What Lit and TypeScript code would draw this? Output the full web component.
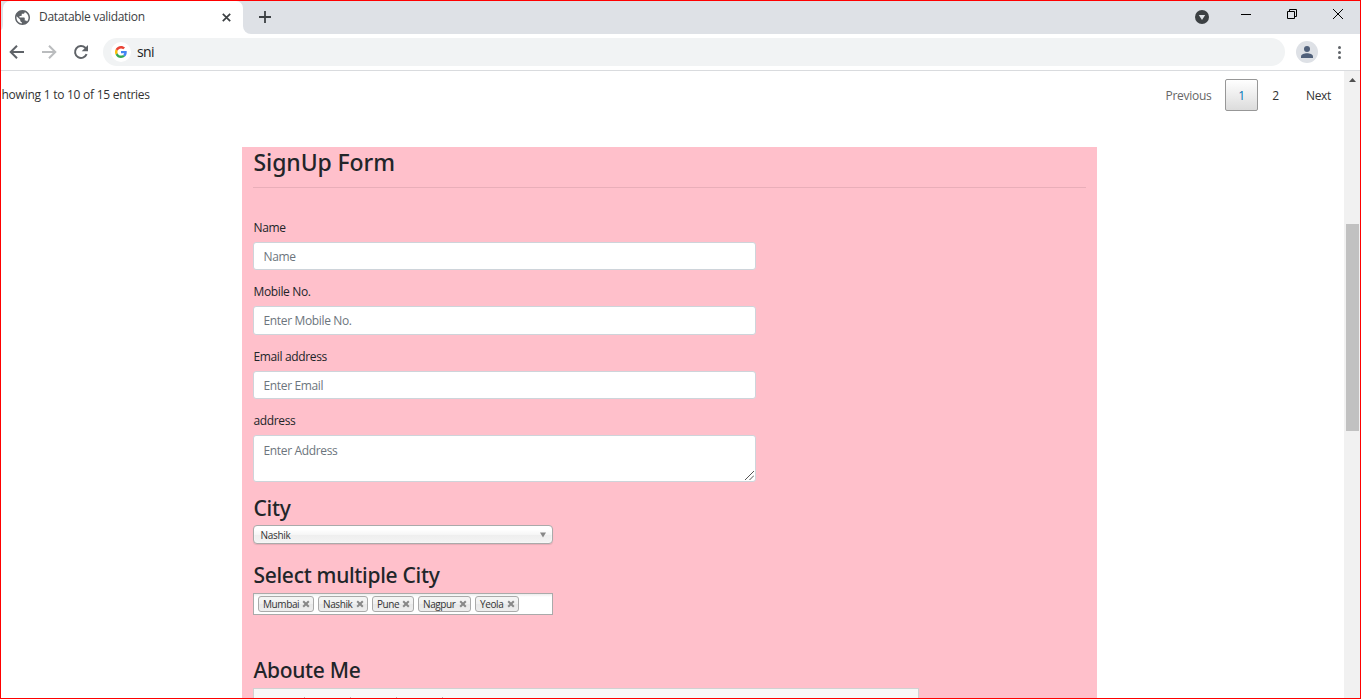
import { LitElement, html, css } from "lit";
import { customElement } from "lit/decorators.js";

interface Field { label: string; placeholder: string; cls: string; }

const FIELDS: Field[] = [
  { label: "Name", placeholder: "Name", cls: "f1" },
  { label: "Mobile No.", placeholder: "Enter Mobile No.", cls: "f2" },
  { label: "Email address", placeholder: "Enter Email", cls: "f3" },
];

const CITIES = [
  { name: "Mumbai", width: 56 },
  { name: "Nashik", width: 50 },
  { name: "Pune", width: 42 },
  { name: "Nagpur", width: 53 },
  { name: "Yeola", width: 44 },
];

@customElement("browser-chrome")
export class BrowserChrome extends LitElement {
  static styles = css`
    :host { display: block; flex: none; font-family: "Open Sans", "Noto Sans", sans-serif; color: #3c4043; }
    svg { display: block; flex: none; }
    .strip { display: flex; height: 33px; background: #dee1e6; }
    .edge { width: 2px; background: #fff; }
    .edge i { display: block; height: 29px; background: #dee1e6; border-bottom-right-radius: 2px 6px; }
    .tab { box-sizing: border-box; width: 240px; height: 33px; display: flex; align-items: center; padding-left: 12px; background: #fff; border-radius: 7px 7px 0 0; }
    .title { margin: -1px 0 0 9px; width: 183px; font-size: 12px; letter-spacing: -0.32px; line-height: 16px; white-space: nowrap; }
    .after { width: 8px; background: #fff; }
    .after i { display: block; height: 33px; background: #dee1e6; border-bottom-left-radius: 8px; }
    .plus { margin: 10px 0 0 8px; }
    .spacer { flex: 1; }
    .win { margin-top: 7px; }
    .down { margin: 9px 32px 0 0; }
    .min { margin-right: 36px; }
    .max { margin-right: 35px; }
    .close { margin-right: 16px; }
    .bar { display: flex; align-items: center; box-sizing: border-box; height: 37px; background: #fff; border-bottom: 1px solid #d9dbde; padding-left: 6px; }
    .nav { margin-right: 12px; }
    .omni { display: flex; align-items: center; flex: 1; height: 28px; border-radius: 14px; background: #f1f3f4; padding-left: 8px; }
    .omni span { margin-left: 6px; font-size: 14px; letter-spacing: -0.6px; line-height: 20px; color: #202124; }
    .g { width: 20px; height: 20px; border-radius: 50%; background: #fff; display: flex; align-items: center; justify-content: center; }
    .avatar { margin: 0 0 0 11px; }
    .dots { margin: 0 19px 0 20px; }
  `;

  render() {
    return html`
      <div class="strip">
        <div class="edge"><i></i></div>
        <div class="tab">
          <svg width="15" height="15" viewBox="2 2 20 20"><path fill="#5f6368" d="M12 2C6.480 2 2 6.480 2 12s4.480 10 10 10 10-4.480 10-10S17.520 2 12 2zm-1 17.930c-3.950-.49-7-3.850-7-7.930 0-.62.08-1.210.21-1.790L9 15v1c0 1.100.9 2 2 2v1.930zm6.900-2.540c-.26-.81-1-1.390-1.900-1.390h-1v-3c0-.55-.45-1-1-1H8v-2h2c.55 0 1-.45 1-1V7h2c1.100 0 2-.9 2-2v-.41c2.930 1.190 5 4.060 5 7.410 0 2.080-.8 3.970-2.100 5.390z"/></svg>
          <span class="title">Datatable validation</span>
          <svg width="9" height="9" viewBox="0 0 9 9"><path d="M.8.8 8.200 8.200M8.200.8.8 8.200" stroke="#3c4043" stroke-width="1.700"/></svg>
        </div>
        <div class="after"><i></i></div>
        <svg class="plus" width="12" height="12" viewBox="0 0 12 12"><path d="M6 0v12M0 6h12" stroke="#3c4043" stroke-width="1.800"/></svg>
        <div class="spacer"></div>
        <svg class="down" width="14" height="14" viewBox="0 0 14 14"><circle cx="7" cy="7" r="7" fill="#3c4043"/><path d="M3.800 5h6.400L7 10z" fill="#dee1e6"/></svg>
        <svg class="win min" width="10" height="12" viewBox="0 0 10 12"><path d="M0 6.500h10" stroke="#000"/></svg>
        <svg class="win max" width="10" height="12" viewBox="0 0 10 12"><path d="M.5 3.500h7v7h-7zM2.500 3.500v-2h7v7h-2" fill="none" stroke="#000"/></svg>
        <svg class="win close" width="12" height="12" viewBox="0 0 12 12"><path d="M1 1l10 10M11 1 1 11" stroke="#000"/></svg>
      </div>
      <div class="bar">
        <svg class="nav" width="20" height="20" viewBox="0 0 20 20"><path d="M17 10H4M10 3.700 3.700 10l6.300 6.300" fill="none" stroke="#5f6368" stroke-width="2"/></svg>
        <svg class="nav" width="20" height="20" viewBox="0 0 20 20"><path d="M3 10h13M10 3.700 16.300 10 10 16.300" fill="none" stroke="#babcbe" stroke-width="2"/></svg>
        <svg class="nav" width="20" height="20" viewBox="0 0 20 20"><path d="M15.600 12.200A6 6 0 1 1 14.300 5.700L15.500 7" fill="none" stroke="#5f6368" stroke-width="2"/><path d="M17 3v6.300h-6.300z" fill="#5f6368"/></svg>
        <div class="omni">
          <div class="g"><svg width="12" height="12" viewBox="0 0 48 48"><path fill="#EA4335" d="M24 9.500c3.540 0 6.710 1.220 9.210 3.600l6.850-6.850C35.900 2.380 30.470 0 24 0 14.620 0 6.510 5.380 2.560 13.220l7.980 6.190C12.430 13.720 17.740 9.500 24 9.500z"/><path fill="#4285F4" d="M46.980 24.550c0-1.570-.15-3.090-.38-4.550H24v9.020h12.940c-.58 2.960-2.260 5.480-4.780 7.180l7.730 6c4.510-4.180 7.090-10.360 7.090-17.650z"/><path fill="#FBBC05" d="M10.530 28.590A14.500 14.500 0 0 1 9.770 24c0-1.600.27-3.140.76-4.590l-7.980-6.190A23.900 23.900 0 0 0 0 24c0 3.880.92 7.540 2.560 10.780z"/><path fill="#34A853" d="M24 48c6.480 0 11.930-2.130 15.890-5.810l-7.730-6c-2.150 1.450-4.920 2.300-8.160 2.300-6.260 0-11.570-4.220-13.470-9.910l-7.980 6.190C6.510 42.620 14.620 48 24 48z"/></svg></div>
          <span>sni</span>
        </div>
        <svg class="avatar" width="22" height="22" viewBox="0 0 22 22"><circle cx="11" cy="11" r="11" fill="#dee1e6"/><circle cx="11" cy="8" r="3" fill="#50607a"/><path d="M5 17v-1.500c0-2.200 3.500-3.300 6-3.300s6 1.100 6 3.300V17z" fill="#50607a"/></svg>
        <svg class="dots" width="3" height="13" viewBox="0 0 3 13"><g fill="#5f6368"><circle cx="1.500" cy="1.500" r="1.500"/><circle cx="1.500" cy="6.500" r="1.500"/><circle cx="1.500" cy="11.500" r="1.500"/></g></svg>
      </div>
    `;
  }
}

@customElement("signup-form")
export class SignupForm extends LitElement {
  static styles = css`
    :host { display: block; box-sizing: border-box; width: 855px; height: 560px; padding: 0 11px; background: #ffc0cb; color: #212529; font-family: "Open Sans", "Noto Sans", sans-serif; }
    h3, h4 { margin: 0; padding-left: 0.5px; font-family: "Noto Sans", "Open Sans", sans-serif; font-weight: 500; white-space: nowrap; }
    h3 { font-size: 23px; line-height: 31px; height: 40px; letter-spacing: -0.1px; }
    .rule { height: 1px; background: #e9aeb9; margin-bottom: 30px; }
    .label { height: 20px; font-size: 12px; line-height: 20px; letter-spacing: -0.36px; padding-left: 0.5px; }
    .box { box-sizing: border-box; width: 503px; margin-top: 4px; border: 1px solid #ced4da; border-radius: 3px; background: #fff; color: #6c757d; font-size: 12px; letter-spacing: -0.35px; line-height: 19px; padding: 4px 9px 4px 9.5px; }
    .f1 { height: 28px; margin-bottom: 12px; }
    .f2 { height: 29px; margin-bottom: 12px; }
    .f3 { height: 28px; margin-bottom: 12px; }
    .area { height: 47px; padding-top: 5px; display: flex; justify-content: space-between; }
    .grip { align-self: flex-end; margin: 0 -8px -3px 0; }
    h4 { font-size: 21px; line-height: 28px; letter-spacing: -0.3px; }
    .city { margin-top: 12px; height: 31px; }
    .select { box-sizing: border-box; width: 300px; height: 19px; display: flex; align-items: center; justify-content: space-between; padding: 1px 6px 0 6.500px; border: 1px solid #aaa; border-radius: 4px; background: linear-gradient(#fff 20%, #f6f6f6 50%, #eee 52%, #f4f4f4); box-shadow: 0 0 2px #fff inset, 0 1px 1px rgba(0,0,0,.1); font-size: 10px; letter-spacing: -0.3px; color: #333; }
    .multi { margin-top: 17px; height: 32px; }
    .chips { box-sizing: border-box; width: 300px; height: 22px; display: flex; align-items: flex-start; gap: 4px; padding: 2px 4px; border: 1px solid #aaa; background: linear-gradient(#eee 1%, #fff 15%); }
    .chip { box-sizing: border-box; height: 16px; display: flex; align-items: center; justify-content: space-between; padding: 0 3px 0 4px; border: 1px solid #aaa; border-radius: 3px; background: linear-gradient(#f4f4f4 20%, #f0f0f0 50%, #e8e8e8 52%, #eee); color: #333; font-size: 10px; letter-spacing: -0.4px; line-height: 14px; }
    .about { margin-top: 41px; height: 32px; }
    .editor { box-sizing: border-box; width: 666px; height: 40px; border: 1px solid #d1d1d1; background: #f8f8f8; display: flex; padding: 8px 0 0 50px; gap: 45px; }
    .editor i { width: 1px; height: 20px; background: #bcbcbc; }
  `;

  render() {
    return html`
      <h3>SignUp Form</h3>
      <div class="rule"></div>
      ${FIELDS.map((f) => html`<div class="label">${f.label}</div><div class="box ${f.cls}">${f.placeholder}</div>`)}
      <div class="label">address</div>
      <div class="box area"><span>Enter Address</span><svg class="grip" width="9" height="9" viewBox="0 0 9 9"><path d="M0 9 9 0M4.500 9 9 4.500" stroke="#555"/></svg></div>
      <h4 class="city">City</h4>
      <div class="select"><span>Nashik</span><svg width="6" height="6" viewBox="0 0 6 6"><path d="M0 .5h6L3 5.500z" fill="#888"/></svg></div>
      <h4 class="multi">Select multiple City</h4>
      <div class="chips">
        ${CITIES.map((c) => html`<div class="chip" style="width:${c.width}px"><span>${c.name}</span><svg width="8" height="8" viewBox="0 0 8 8"><path d="M1.200 1.200 6.800 6.800M6.800 1.200 1.200 6.800" stroke="#888" stroke-width="2"/></svg></div>`)}
      </div>
      <h4 class="about">Aboute Me</h4>
      <div class="editor"><i></i><i></i><i></i><i></i></div>
    `;
  }
}

@customElement("app-root")
export class AppRoot extends LitElement {
  static styles = css`
    :host { display: flex; flex-direction: column; box-sizing: border-box; width: 1361px; height: 699px; border: 1px solid #f00; overflow: hidden; background: #fff; font-family: "Open Sans", "Noto Sans", sans-serif; color: #333; }
    .view { flex: 1; min-height: 0; display: flex; }
    .page { flex: 1; min-width: 0; overflow: hidden; }
    .info { display: flex; height: 76px; font-size: 12px; line-height: 20px; letter-spacing: -0.3px; box-sizing: border-box; padding: 8px 0 0; }
    .count { margin-top: 6px; flex: 1; padding-left: 0.5px; letter-spacing: -0.25px; }
    .pg { display: flex; height: 32px; line-height: 33px; text-align: center; }
    .prev { width: 59px; color: #666; }
    .cur { box-sizing: border-box; width: 33px; border: 1px solid #979797; border-radius: 2px; background: linear-gradient(#fff, #dcdcdc); line-height: 31px; margin-left: 7px; color: #0275b8; }
    .two { width: 35px; }
    .next { width: 51px; }
    signup-form { margin-left: 241px; }
    .scroll { width: 16px; background: #f1f1f1; display: flex; flex-direction: column; align-items: center; }
    .up { margin-top: 7px; display: block; }
    .thumb { width: 13px; height: 207px; margin-top: 142px; background: #c1c1c1; }
  `;

  render() {
    return html`
      <browser-chrome></browser-chrome>
      <div class="view">
        <div class="page">
          <div class="info">
            <div class="count">howing 1 to 10 of 15 entries</div>
            <div class="pg"><span class="prev">Previous</span><span class="cur">1</span><span class="two">2</span><span class="next">Next</span></div>
          </div>
          <signup-form></signup-form>
        </div>
        <div class="scroll"><svg class="up" width="7" height="4" viewBox="0 0 7 4"><path d="M0 4h7L3.500 0z" fill="#505050"/></svg><div class="thumb"></div></div>
      </div>
    `;
  }
}
